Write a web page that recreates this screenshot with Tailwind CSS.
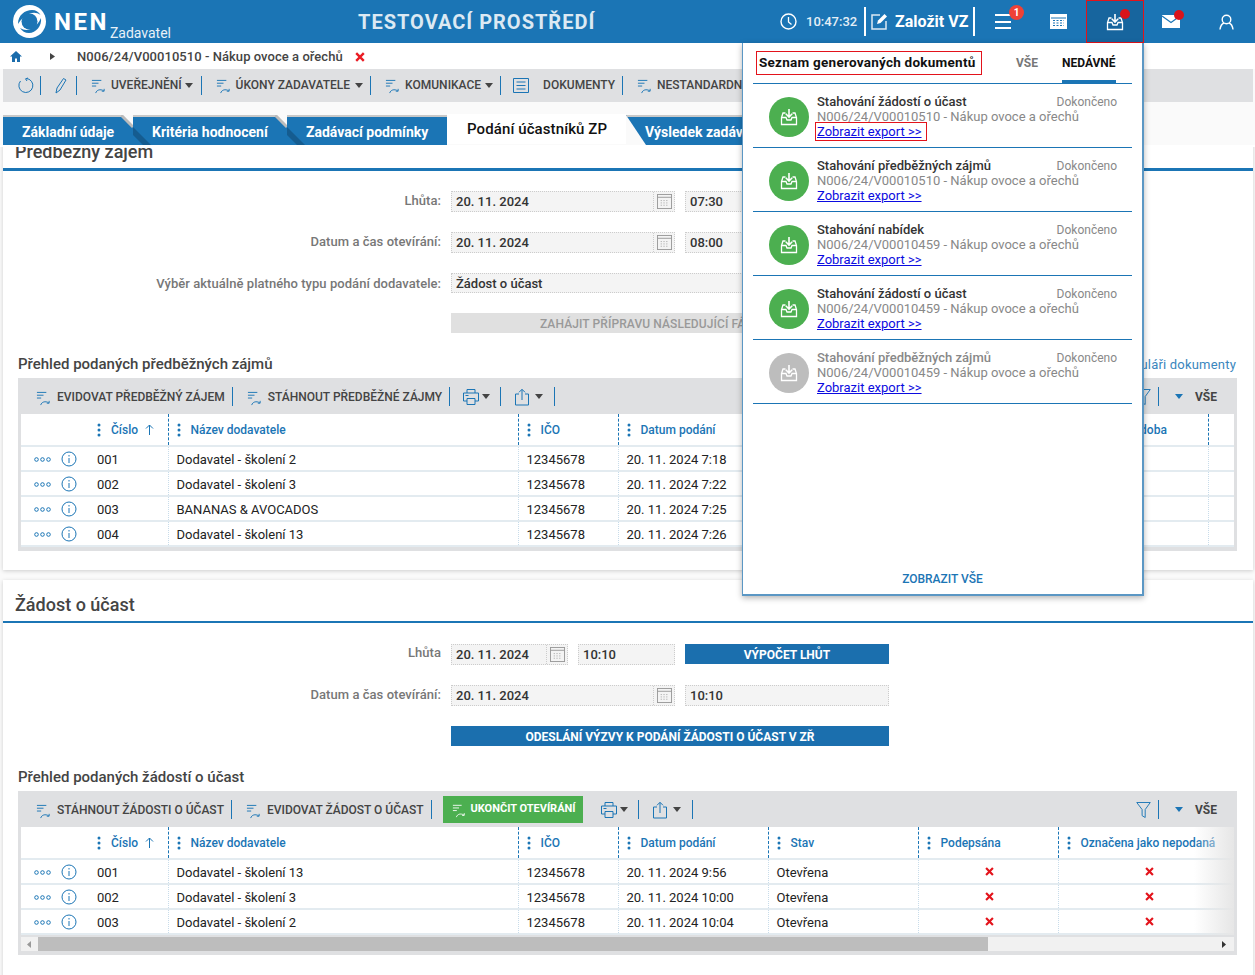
<!DOCTYPE html>
<html lang="cs">
<head>
    <meta charset="UTF-8">
    <title>NEN - Zadavatel</title>
    <script src="https://cdn.jsdelivr.net/npm/@tailwindcss/browser@4"></script>
</head>
<body class="bg-[#fafafa] font-['Roboto',sans-serif] text-[13px] text-[#222] overflow-hidden h-[975px] relative">

<!-- shared icons -->
<svg class="hidden">
    <symbol id="i-action" viewBox="0 0 16 16"><path d="M1 1.5h10M1 4.500h7M1 7.500h4.500" fill="none" stroke="currentColor" stroke-width="1"/><path d="M5 15c1-3.500 5-4.500 8.500-2.500M14 10.500v2.500h-2.500" fill="none" stroke="currentColor" stroke-width="1"/></symbol>
    <symbol id="i-inbox" viewBox="0 0 18 18"><path d="M5.500 5H3L1.500 9.500V16.500H16.500V9.500L15 5H12.500M1.500 9.500H6L7 12H11L12 9.500H16.500" fill="none" stroke="currentColor" stroke-width="1.300"/><path d="M9 1V9M5.800 5.800L9 9l3.200-3.200" fill="none" stroke="currentColor" stroke-width="1.600"/></symbol>
    <symbol id="i-cal" viewBox="0 0 16 16"><rect x=".5" y=".5" width="15" height="15" fill="none" stroke="currentColor"/><path d="M.5 3.500h15" stroke="currentColor"/><path d="M4 7h2M7 7h2M10 7h2M4 9.500h2M7 9.500h2M10 9.500h2M4 12h2M7 12h2M10 12h2" stroke="currentColor" stroke-dasharray="1 1"/></symbol>
    <symbol id="i-print" viewBox="0 0 18 18"><path d="M5 5V1.500h8V5M5 13H1.500V5h15v8H13M5 10.500h8v6H5z" fill="none" stroke="currentColor"/><path d="M3.500 7.500h3" stroke="currentColor"/></symbol>
    <symbol id="i-share" viewBox="0 0 16 18"><path d="M5 6H1.500v11h13V6H11M8 12V1.500M5 4.300L8 1.300l3 3" fill="none" stroke="currentColor"/></symbol>
    <symbol id="i-funnel" viewBox="0 0 16 18"><path d="M.8 1h14.400L9.800 8.500V17L6.500 15V8.500z" fill="none" stroke="currentColor"/></symbol>
    <symbol id="i-x" viewBox="0 0 10 10"><path d="M1.200 1.200l7.600 7.600M8.800 1.200L1.200 8.800" stroke="currentColor" stroke-width="2.400"/></symbol>
    <symbol id="i-kebab" viewBox="0 0 4 14"><circle cx="2" cy="2" r="1.500" fill="currentColor"/><circle cx="2" cy="7" r="1.500" fill="currentColor"/><circle cx="2" cy="12" r="1.500" fill="currentColor"/></symbol>
    <symbol id="i-caret" viewBox="0 0 8 5"><path d="M0 0h8L4 5z" fill="currentColor"/></symbol>
</svg>

<!-- top bar -->
<header class="h-[43px] bg-[#1b75b5] flex items-center text-white relative">
    <svg class="ml-[13px] w-[33px] h-[33px]" viewBox="0 0 33 33">
        <circle cx="16.500" cy="16.500" r="16.500" fill="#fff"/>
        <path d="M5 19C5 10 12 5 19 5c4 0 7 2 8.500 5-3-2.500-7-3-10.500-1.500C12 10.500 8 14 5 19z" fill="#1b75b5"/>
        <path d="M28 13c1 8-5 15-12 15-4 0-7-2-9-5 4 2.500 8 2.500 12 .5 4-2.500 7-6 9-10.500z" fill="#1b75b5"/>
        <circle cx="16.500" cy="16.500" r="8" fill="#1b75b5"/>
    </svg>
    <span class="ml-[8px] text-[24px] font-bold tracking-[2.500px] leading-none">NEN</span>
    <span class="ml-[1px] self-end mb-[1px] text-[14px] leading-[18px] text-[#e8f1f8]">Zadavatel</span>
    <span class="ml-[187px] w-[240px] text-[20px] font-bold tracking-[1px] text-[#dce9f3]">TESTOVACÍ PROSTŘEDÍ</span>
    <svg class="ml-[182px] w-[17px] h-[17px]" viewBox="0 0 17 17"><circle cx="8.500" cy="8.500" r="7.500" fill="none" stroke="#fff" stroke-width="1.400"/><path d="M8.500 4v5l3 2.500" fill="none" stroke="#fff" stroke-width="1.300"/></svg>
    <span class="ml-[9px] w-[52px] font-medium text-[#e4eff7]">10:47:32</span>
    <span class="ml-[6px] w-[2px] h-[29px] bg-white"></span>
    <svg class="ml-[5px] w-[17px] h-[17px]" viewBox="0 0 17 17"><path d="M9 2H1v14h14V8" fill="none" stroke="#dce9f3" stroke-width="1.500"/><path d="M6 11l1-3.500L13.500 1 16 3.500 9.500 10z" fill="#fff"/></svg>
    <span class="ml-[7px] w-[75px] text-[16px] font-bold">Založit VZ</span>
    <span class="ml-[3px] w-[2px] h-[29px] bg-white"></span>
    <span class="relative ml-[20px] w-[16px] h-[15px] flex flex-col justify-between">
        <i class="h-[2px] bg-white"></i><i class="h-[2px] bg-white"></i><i class="h-[2px] bg-white"></i>
        <b class="absolute -top-[9px] left-[14px] w-[15px] h-[15px] rounded-full bg-[#ef4136] text-[10px] leading-[15px] text-center">1</b>
    </span>
    <svg class="ml-[39px] w-[17px] h-[15px]" viewBox="0 0 17 15"><path d="M0 0h17v15H0z" fill="#fff"/><path d="M1 4h15" stroke="#1b75b5"/><path d="M3 6.500h11M3 9h11M3 11.500h11" stroke="#1b75b5" stroke-width="1.200" stroke-dasharray="2 1.500"/></svg>
    <div class="relative ml-[19px] w-[58px] h-[43px] bg-[#17659e] border border-[#e3131b] flex items-center justify-center">
        <svg class="w-[18px] h-[18px] text-white"><use href="#i-inbox"/></svg>
        <span class="absolute top-[8px] left-[33px] w-[10px] h-[10px] rounded-full bg-[#d9141b]"></span>
    </div>
    <div class="relative ml-[18px] w-[18px] h-[13px]">
        <svg class="w-[18px] h-[13px]" viewBox="0 0 18 13"><path d="M0 0h18v13H0z" fill="#fff"/><path d="M0 1l9 6.500L18 1" fill="none" stroke="#1b75b5" stroke-width="1.200"/></svg>
        <span class="absolute -top-[5px] left-[12px] w-[10px] h-[10px] rounded-full bg-[#d9141b]"></span>
    </div>
    <svg class="ml-[39px] w-[15px] h-[16px]" viewBox="0 0 15 16"><circle cx="7.500" cy="5.500" r="4.300" fill="none" stroke="#fff" stroke-width="1.400"/><path d="M1 15.500c.5-3.500 2.500-6 4-6.500M14 15.500c-.5-3.500-2.500-6-4-6.500" fill="none" stroke="#fff" stroke-width="1.400"/></svg>
</header>

<!-- breadcrumb -->
<div class="h-[26px] pt-[1px] bg-white flex items-center text-[13px] font-medium tracking-[0.050px] text-[#444]">
    <svg class="ml-[10px] w-[12px] h-[11px] text-[#1b6cab]" viewBox="0 0 12 11"><path d="M6 0L0 5.500h2V11h3V7.500h2V11h3V5.500h2z" fill="currentColor"/></svg>
    <svg class="ml-[28px] w-[5px] h-[7px] text-[#444]" viewBox="0 0 5 7"><path d="M0 0l5 3.500L0 7z" fill="currentColor"/></svg>
    <span class="ml-[22px]">N006/24/V00010510 - Nákup ovoce a ořechů</span>
    <svg class="ml-[12px] w-[10px] h-[10px] text-[#ea1c24]"><use href="#i-x"/></svg>
</div>

<!-- action toolbar -->
<div class="ml-[3px] mr-[2px] h-[33px] pb-[1px] bg-[#dfe0e2] flex items-center font-medium text-[12px] text-[#444] whitespace-nowrap overflow-hidden">
    <svg class="ml-[14px] w-[17px] h-[17px] text-[#1b75b5]" viewBox="0 0 17 17"><path d="M9 1.500a7 7 0 1 1-5.500 2.500M11 1L8.500 1.800 10 4" fill="none" stroke="currentColor"/></svg>
    <span class="ml-[6px] w-px h-[19px] bg-[#1b75b5]"></span>
    <svg class="ml-[14px] w-[12px] h-[17px] text-[#1b75b5]" viewBox="0 0 12 17"><path d="M1 16l1-5L8.500 1.500l2.500 1.500L5 13z" fill="none" stroke="currentColor"/></svg>
    <span class="ml-[9px] w-px h-[19px] bg-[#1b75b5]"></span>
    <svg class="ml-[14px] w-[15px] h-[15px] text-[#1b75b5] mt-[3px]"><use href="#i-action"/></svg>
    <span class="ml-[5px]">UVEŘEJNĚNÍ</span>
    <svg class="ml-[3px] w-[8px] h-[5px] text-[#444]"><use href="#i-caret"/></svg>
    <span class="ml-[8px] w-px h-[19px] bg-[#1b75b5]"></span>
    <svg class="ml-[14px] w-[15px] h-[15px] text-[#1b75b5] mt-[3px]"><use href="#i-action"/></svg>
    <span class="ml-[5px]">ÚKONY ZADAVATELE</span>
    <svg class="ml-[5px] w-[8px] h-[5px] text-[#444]"><use href="#i-caret"/></svg>
    <span class="ml-[7px] w-px h-[19px] bg-[#1b75b5]"></span>
    <svg class="ml-[14px] w-[15px] h-[15px] text-[#1b75b5] mt-[3px]"><use href="#i-action"/></svg>
    <span class="ml-[5px]">KOMUNIKACE</span>
    <svg class="ml-[4px] w-[8px] h-[5px] text-[#444]"><use href="#i-caret"/></svg>
    <span class="ml-[7px] w-px h-[19px] bg-[#1b75b5]"></span>
    <svg class="ml-[12px] w-[16px] h-[15px] text-[#1b75b5]" viewBox="0 0 16 15"><path d="M.5.500h15v14H.500zM3.500 4h9M3.500 7.500h9M3.500 11h9" fill="none" stroke="currentColor"/></svg>
    <span class="ml-[14px]">DOKUMENTY</span>
    <span class="ml-[7px] w-px h-[19px] bg-[#1b75b5]"></span>
    <svg class="ml-[14px] w-[15px] h-[15px] text-[#1b75b5] mt-[3px]"><use href="#i-action"/></svg>
    <span class="ml-[5px]">NESTANDARDNÍ ÚKONY</span>
</div>

<!-- tabs -->
<nav class="relative z-10 h-[45px] pt-[13px] pl-[3px] bg-[linear-gradient(#fafafa_43px,#fff_43px)] flex text-[14px] font-bold text-white whitespace-nowrap">
    <div class="relative w-[130px] h-[30px] bg-[#1b75b5] border-t-2 border-[#c8c8c8] pl-[19px] leading-[30px]">Základní údaje
        <svg class="absolute -top-[2px] right-0 w-[12px] h-[30px]" viewBox="0 0 12 30"><path d="M0 0h12v12z" fill="#fafafa"/><path d="M0 0l12 12" stroke="#bbb" stroke-width="3"/></svg>
    </div>
    <div class="relative w-[154px] h-[30px] bg-[#1b75b5] border-t-2 border-[#c8c8c8] pl-[19px] leading-[30px]">Kritéria hodnocení
        <svg class="absolute -top-[2px] -left-[12px] w-[30px] h-[30px]" viewBox="0 0 30 30"><path d="M12 12l18 18h-8L12 20z" fill="#155c90"/></svg>
        <svg class="absolute -top-[2px] right-0 w-[12px] h-[30px]" viewBox="0 0 12 30"><path d="M0 0h12v12z" fill="#fafafa"/><path d="M0 0l12 12" stroke="#bbb" stroke-width="3"/></svg>
    </div>
    <div class="relative w-[160px] h-[30px] bg-[#1b75b5] border-t-2 border-[#c8c8c8] pl-[19px] leading-[30px]">Zadávací podmínky
        <svg class="absolute -top-[2px] -left-[12px] w-[30px] h-[30px]" viewBox="0 0 30 30"><path d="M12 12l18 18h-8L12 20z" fill="#155c90"/></svg>
    </div>
    <div class="w-[179px] h-[30px] -mt-[1px] bg-white pl-[20px] text-[#111] text-[15px] font-medium tracking-[0.100px] leading-[30px]">Podání účastníků ZP</div>
    <div class="w-[140px] h-[30px] bg-[#1b75b5] border-t-2 border-[#c8c8c8] pl-[19px] leading-[30px] [clip-path:polygon(0_0,100%_0,100%_100%,20px_100%)]">Výsledek zadávání</div>
</nav>

<main class="-mt-[12px] px-[3px] pr-[2px]">
    <!-- predbezny zajem -->
    <section class="h-[435px] bg-white shadow-[0_1px_4px_rgba(0,0,0,0.18)] pt-[5px]">
        <h2 class="h-[24px] pl-[12px] text-[18px] font-medium leading-[24px] text-[#444]">Předběžný zájem</h2>
        <div class="mt-[4px] h-[3px] bg-[#1b75b5]"></div>

        <div class="mt-[20px] flex h-[21px]">
            <label class="w-[438px] text-right text-[13px] font-medium text-[#777] tracking-[0.050px]">Lhůta:</label>
            <div class="ml-[10px] flex">
                <div class="w-[224px] h-[21px] bg-[#f4f4f4] border border-dotted border-[#ccc] pl-[4px] flex items-center justify-between font-medium text-[#333]">20. 11. 2024
                    <span class="h-full w-[21px] border-l border-dotted border-[#ccc] flex items-center justify-center"><svg class="w-[15px] h-[15px] text-[#999]"><use href="#i-cal"/></svg></span>
                </div>
                <div class="ml-[10px] w-[204px] h-[21px] bg-[#f4f4f4] border border-dotted border-[#ccc] pl-[4px] flex items-center font-medium text-[#333]">07:30</div>
            </div>
        </div>
        <div class="mt-[20px] flex h-[21px]">
            <label class="w-[438px] text-right text-[13px] font-medium text-[#777] tracking-[0.050px]">Datum a čas otevírání:</label>
            <div class="ml-[10px] flex">
                <div class="w-[224px] h-[21px] bg-[#f4f4f4] border border-dotted border-[#ccc] pl-[4px] flex items-center justify-between font-medium text-[#333]">20. 11. 2024
                    <span class="h-full w-[21px] border-l border-dotted border-[#ccc] flex items-center justify-center"><svg class="w-[15px] h-[15px] text-[#999]"><use href="#i-cal"/></svg></span>
                </div>
                <div class="ml-[10px] w-[204px] h-[21px] bg-[#f4f4f4] border border-dotted border-[#ccc] pl-[4px] flex items-center font-medium text-[#333]">08:00</div>
            </div>
        </div>
        <div class="mt-[20px] flex h-[20px]">
            <label class="w-[438px] pt-[1px] text-right text-[13px] font-medium text-[#777] tracking-[0.050px]">Výběr aktuálně platného typu podání dodavatele:</label>
            <div class="ml-[10px] w-[438px] h-[20px] pt-[1px] bg-[#f4f4f4] border border-dotted border-[#ccc] pl-[4px] flex items-center font-medium text-[#333]">Žádost o účast</div>
        </div>
        <div class="mt-[20px] ml-[448px] w-[438px] h-[20px] bg-[#e0e0e0] text-center text-[12px] font-medium tracking-[0.100px] leading-[22px] text-[#999]">ZAHÁJIT PŘÍPRAVU NÁSLEDUJÍCÍ FÁZE ŘÍZENÍ</div>

        <div class="mt-[20px] pt-[3px] flex items-center justify-between pl-[15px] pr-[17px] h-[20px]">
            <h3 class="text-[15px] font-medium text-[#444]">Přehled podaných předběžných zájmů</h3>
            <a class="text-[13px] text-[#3a86bd] tracking-[0.200px]">Zobrazit ve formuláři dokumenty</a>
        </div>

        <div class="mt-[5px] ml-[15px] mr-[16px] h-[173px] bg-[#dfe0e2] px-[3px] pb-[3px]">
            <div class="h-[36px] pt-[1px] flex items-center font-medium text-[12px] text-[#444] whitespace-nowrap">
                <svg class="ml-[15px] w-[15px] h-[15px] text-[#1b75b5] mt-[3px]"><use href="#i-action"/></svg>
                <span class="ml-[6px]">EVIDOVAT PŘEDBĚŽNÝ ZÁJEM</span>
                <span class="ml-[7px] w-px h-[19px] bg-[#1b75b5]"></span>
                <svg class="ml-[14px] w-[15px] h-[15px] text-[#1b75b5] mt-[3px]"><use href="#i-action"/></svg>
                <span class="ml-[6px]">STÁHNOUT PŘEDBĚŽNÉ ZÁJMY</span>
                <span class="ml-[7px] w-px h-[19px] bg-[#1b75b5]"></span>
                <svg class="ml-[12px] w-[18px] h-[18px] text-[#1b75b5]"><use href="#i-print"/></svg>
                <svg class="ml-[2px] w-[8px] h-[5px] text-[#444]"><use href="#i-caret"/></svg>
                <span class="ml-[10px] w-px h-[19px] bg-[#1b75b5]"></span>
                <svg class="ml-[13px] w-[16px] h-[18px] text-[#1b75b5]"><use href="#i-share"/></svg>
                <svg class="ml-[5px] w-[8px] h-[5px] text-[#444]"><use href="#i-caret"/></svg>
                <span class="ml-[11px] w-px h-[19px] bg-[#1b75b5]"></span>
                <svg class="ml-auto w-[15px] h-[18px] text-[#1b75b5]"><use href="#i-funnel"/></svg>
                <span class="ml-[7px] w-px h-[19px] bg-[#1b75b5]"></span>
                <svg class="ml-[16px] w-[8px] h-[5px] text-[#1b75b5]"><use href="#i-caret"/></svg>
                <span class="ml-[12px] mr-[17px] font-bold">VŠE</span>
            </div>
            <table class="table-fixed w-full bg-white">
                <colgroup>
                    <col class="w-[147px]"><col class="w-[350px]"><col class="w-[100px]"><col class="w-[150px]"><col class="w-[150px]"><col class="w-[140px]"><col class="w-[150px]"><col>
                </colgroup>
                <thead id="head1"></thead>
                <tbody id="rows1"></tbody>
            </table>
        </div>
    </section>

    <!-- zadost o ucast -->
    <section class="mt-[10px] h-[400px] bg-white shadow-[0_1px_4px_rgba(0,0,0,0.18)] pt-[13px]">
        <h2 class="h-[24px] pl-[12px] text-[18px] font-medium leading-[24px] text-[#444]">Žádost o účast</h2>
        <div class="mt-[4px] h-[2px] bg-[#1b75b5]"></div>

        <div class="mt-[21px] flex h-[21px]">
            <label class="w-[438px] -mt-[1px] text-right text-[13px] font-medium text-[#777] tracking-[0.050px]">Lhůta</label>
            <div class="ml-[10px] flex">
                <div class="w-[117px] h-[21px] bg-[#f4f4f4] border border-dotted border-[#ccc] pl-[4px] flex items-center justify-between font-medium text-[#333]">20. 11. 2024
                    <span class="h-full w-[21px] border-l border-dotted border-[#ccc] flex items-center justify-center"><svg class="w-[15px] h-[15px] text-[#999]"><use href="#i-cal"/></svg></span>
                </div>
                <div class="ml-[10px] w-[97px] h-[21px] bg-[#f4f4f4] border border-dotted border-[#ccc] pl-[4px] flex items-center font-medium text-[#333]">10:10</div>
                <div class="ml-[10px] w-[204px] h-[20px] bg-[#1b6fae] text-center text-[12px] font-bold leading-[22px] text-white">VÝPOČET LHŮT</div>
            </div>
        </div>
        <div class="mt-[20px] flex h-[21px]">
            <label class="w-[438px] text-right text-[13px] font-medium text-[#777] tracking-[0.050px]">Datum a čas otevírání:</label>
            <div class="ml-[10px] flex">
                <div class="w-[224px] h-[21px] bg-[#f4f4f4] border border-dotted border-[#ccc] pl-[4px] flex items-center justify-between font-medium text-[#333]">20. 11. 2024
                    <span class="h-full w-[21px] border-l border-dotted border-[#ccc] flex items-center justify-center"><svg class="w-[15px] h-[15px] text-[#999]"><use href="#i-cal"/></svg></span>
                </div>
                <div class="ml-[10px] w-[204px] h-[21px] bg-[#f4f4f4] border border-dotted border-[#ccc] pl-[4px] flex items-center font-medium text-[#333]">10:10</div>
            </div>
        </div>
        <div class="mt-[20px] ml-[448px] w-[438px] h-[20px] bg-[#1b6fae] text-center text-[12px] font-bold leading-[22px] text-white">ODESLÁNÍ VÝZVY K PODÁNÍ ŽÁDOSTI O ÚČAST V ZŘ</div>

        <h3 class="mt-[20px] pl-[15px] pt-[1px] h-[20px] text-[15px] font-medium leading-[20px] text-[#444]">Přehled podaných žádostí o účast</h3>

        <div class="mt-[5px] ml-[15px] mr-[16px] h-[164px] bg-[#dfe0e2] px-[3px]">
            <div class="h-[36px] pt-[1px] flex items-center font-medium text-[12px] text-[#444] whitespace-nowrap">
                <svg class="ml-[15px] w-[15px] h-[15px] text-[#1b75b5] mt-[3px]"><use href="#i-action"/></svg>
                <span class="ml-[6px]">STÁHNOUT ŽÁDOSTI O ÚČAST</span>
                <span class="ml-[7px] w-px h-[19px] bg-[#1b75b5]"></span>
                <svg class="ml-[14px] w-[15px] h-[15px] text-[#1b75b5] mt-[3px]"><use href="#i-action"/></svg>
                <span class="ml-[6px]">EVIDOVAT ŽÁDOST O ÚČAST</span>
                <span class="ml-[7px] w-px h-[19px] bg-[#1b75b5]"></span>
                <div class="ml-[11px] w-[140px] h-[27px] bg-[#4caf50] text-white flex items-center text-[11px] font-bold">
                    <svg class="ml-[9px] w-[14px] h-[14px] mt-[3px]"><use href="#i-action"/></svg>
                    <span class="ml-[5px]">UKONČIT OTEVÍRÁNÍ</span>
                </div>
                <svg class="ml-[17px] w-[18px] h-[18px] text-[#1b75b5]"><use href="#i-print"/></svg>
                <svg class="ml-[2px] w-[8px] h-[5px] text-[#444]"><use href="#i-caret"/></svg>
                <span class="ml-[10px] w-px h-[19px] bg-[#1b75b5]"></span>
                <svg class="ml-[13px] w-[16px] h-[18px] text-[#1b75b5]"><use href="#i-share"/></svg>
                <svg class="ml-[5px] w-[8px] h-[5px] text-[#444]"><use href="#i-caret"/></svg>
                <span class="ml-[11px] w-px h-[19px] bg-[#1b75b5]"></span>
                <svg class="ml-auto w-[15px] h-[18px] text-[#1b75b5]"><use href="#i-funnel"/></svg>
                <span class="ml-[7px] w-px h-[19px] bg-[#1b75b5]"></span>
                <svg class="ml-[16px] w-[8px] h-[5px] text-[#1b75b5]"><use href="#i-caret"/></svg>
                <span class="ml-[12px] mr-[17px] font-bold">VŠE</span>
            </div>
            <div class="relative">
                <table class="table-fixed w-full bg-white">
                    <colgroup>
                        <col class="w-[147px]"><col class="w-[350px]"><col class="w-[100px]"><col class="w-[150px]"><col class="w-[150px]"><col class="w-[140px]"><col>
                    </colgroup>
                    <thead id="head2"></thead>
                    <tbody id="rows2"></tbody>
                </table>
                <div class="absolute top-0 bottom-0 right-0 w-[40px] bg-gradient-to-r from-transparent to-[#e6e6e6]"></div>
            </div>
            <div class="mt-[2px] h-[14px] bg-[#f1f1f1] flex items-center">
                <svg class="ml-[6px] w-[4px] h-[7px] text-[#999]" viewBox="0 0 4 7"><path d="M4 0L0 3.500 4 7z" fill="currentColor"/></svg>
                <div class="ml-[7px] w-[950px] h-[14px] bg-[#bdbdbd]"></div>
                <svg class="ml-auto mr-[8px] w-[4px] h-[7px] text-[#333]" viewBox="0 0 4 7"><path d="M0 0l4 3.500L0 7z" fill="currentColor"/></svg>
            </div>
        </div>
    </section>
</main>

<!-- generated documents dropdown -->
<aside class="absolute top-[43px] left-[742px] w-[402px] h-[553px] bg-white border-l border-r-2 border-b-2 border-[#5b97c4] shadow-[0_2px_6px_rgba(0,0,0,0.3)] z-20">
    <div class="mx-[10px] h-[41px] flex border-b border-[#1b75b5] relative">
        <h4 class="mt-[8px] h-[24px] w-[226px] ml-[3px] border border-[#e3131b] pl-[2px] text-[13.500px] font-bold leading-[20px] tracking-[0.250px] text-[#111] whitespace-nowrap">Seznam generovaných dokumentů</h4>
        <span class="ml-[34px] mt-[11px] text-[12px] font-bold text-[#777]">VŠE</span>
        <span class="ml-[24px] mt-[11px] h-[29px] w-[54px] text-[12px] font-bold text-[#111] border-b-[3px] border-[#1b75b5] whitespace-nowrap">NEDÁVNÉ</span>
    </div>
    <div id="docs"></div>
    <a class="absolute bottom-[6px] left-0 right-0 text-center text-[12px] font-medium text-[#1b75b5]">ZOBRAZIT VŠE</a>
</aside>

<script>
    const inboxIcon = '<svg class="w-[18px] h-[18px] text-white"><use href="#i-inbox"/></svg>';
    const docs = [
        ['Stahování žádostí o účast', 'N006/24/V00010510', 1, 1],
        ['Stahování předběžných zájmů', 'N006/24/V00010510', 1, 0],
        ['Stahování nabídek', 'N006/24/V00010459', 1, 0],
        ['Stahování žádostí o účast', 'N006/24/V00010459', 1, 0],
        ['Stahování předběžných zájmů', 'N006/24/V00010459', 0, 0]
    ];
    document.getElementById('docs').innerHTML = docs.map(d => `
        <div class="mx-[10px] h-[64px] border-b border-[#1b75b5] flex">
            <div class="ml-[16px] mt-[13px] w-[40px] h-[40px] rounded-full flex items-center justify-center ${d[2] ? 'bg-[#4caf50]' : 'bg-[#bdbdbd]'}">${inboxIcon}</div>
            <div class="ml-[8px] w-[300px] pt-[10px] leading-[15px] whitespace-nowrap">
                <div class="flex justify-between"><span class="font-medium ${d[2] ? 'text-[#333]' : 'text-[#888]'}">${d[0]}</span><span class="translate-y-[1px] text-[12px] text-[#888]">Dokončeno</span></div>
                <div class="text-[#888]">${d[1]} - Nákup ovoce a ořechů</div>
                <a class="underline text-[#0b0be0] ${d[3] ? 'outline outline-1 outline-[#e3131b] outline-offset-1' : ''} inline-block w-[108px]">Zobrazit export &gt;&gt;</a>
            </div>
        </div>`).join('');

    const th = (label, extra) => `<th class="h-[32px] pt-[3px] border-b-2 border-l [border-left-style:dashed] border-l-[#1b75b5] border-b-[#e3ebf0] text-left font-medium text-[12px] text-[#1b75b5] pl-[8px] whitespace-nowrap overflow-hidden"><span class="inline-flex items-center"><svg class="w-[4px] h-[14px] mr-[10px]"><use href="#i-kebab"/></svg>${label}${extra || ''}</span></th>`;
    const sortArrow = '<svg class="ml-[7px] w-[9px] h-[11px]" viewBox="0 0 9 11"><path d="M4.500 11V1M1 4.500L4.500 1 8 4.500" fill="none" stroke="currentColor"/></svg>';
    const firstTh = '<th class="h-[32px] pt-[3px] border-b-2 border-b-[#e3ebf0] text-left font-medium text-[12px] text-[#1b75b5] pl-[76px]"><span class="inline-flex items-center"><svg class="w-[4px] h-[14px] mr-[10px]"><use href="#i-kebab"/></svg>Číslo' + sortArrow + '</span></th>';
    const base = firstTh + th('Název dodavatele') + th('IČO') + th('Datum podání');

    document.getElementById('head1').innerHTML = '<tr>' + base + th('Stav') + th('Podepsána') + th('<span class="ml-[8px]">Zadávací doba</span>') + '<th class="border-b-2 border-l [border-left-style:dashed] border-l-[#1b75b5] border-b-[#e3ebf0]"></th></tr>';
    document.getElementById('head2').innerHTML = '<tr>' + base + th('Stav') + th('Podepsána') + th('Označena jako nepodaná') + '</tr>';

    const td = (content, pad) => `<td class="h-[25px] border-b-2 border-l [border-left-style:dotted] border-l-[#c8dcea] border-b-[#e3ebf0] ${pad || 'pl-[8px] pt-[3px]'} whitespace-nowrap overflow-hidden">${content}</td>`;
    const rowStart = n => `<td class="h-[25px] pt-[1px] border-b-2 border-b-[#e3ebf0]"><div class="flex items-center text-[#1b75b5]"><svg class="ml-[13px] w-[17px] h-[5px]" viewBox="0 0 17 5"><circle cx="2.500" cy="2.500" r="1.800" fill="none" stroke="currentColor"/><circle cx="8.500" cy="2.500" r="1.800" fill="none" stroke="currentColor"/><circle cx="14.500" cy="2.500" r="1.800" fill="none" stroke="currentColor"/></svg><svg class="ml-[10px] w-[16px] h-[16px]" viewBox="0 0 16 16"><circle cx="8" cy="8" r="7" fill="none" stroke="currentColor"/><path d="M8 7v5M8 4v1.500" stroke="currentColor"/></svg><span class="ml-[20px] mt-[2px] text-[#222]">${n}</span></div></td>`;
    const cross = '<svg class="mx-auto w-[9px] h-[9px] text-[#e3131b]"><use href="#i-x"/></svg>';

    const rows1 = [['001', 'Dodavatel - školení 2', '7:18'], ['002', 'Dodavatel - školení 3', '7:22'], ['003', 'BANANAS &amp; AVOCADOS', '7:25'], ['004', 'Dodavatel - školení 13', '7:26']];
    document.getElementById('rows1').innerHTML = rows1.map(r => '<tr>' + rowStart(r[0]) + td(r[1]) + td('12345678') + td('20. 11. 2024 ' + r[2]) + td('') + td('') + td('') + td('') + '</tr>').join('');

    const rows2 = [['001', 'Dodavatel - školení 13', '9:56'], ['002', 'Dodavatel - školení 3', '10:00'], ['003', 'Dodavatel - školení 2', '10:04']];
    document.getElementById('rows2').innerHTML = rows2.map(r => '<tr>' + rowStart(r[0]) + td(r[1]) + td('12345678') + td('20. 11. 2024 ' + r[2]) + td('Otevřena') + td(cross, 'pl-[2px]') + td(cross, 'pl-[6px]') + '</tr>').join('');
</script>
</body>
</html>
